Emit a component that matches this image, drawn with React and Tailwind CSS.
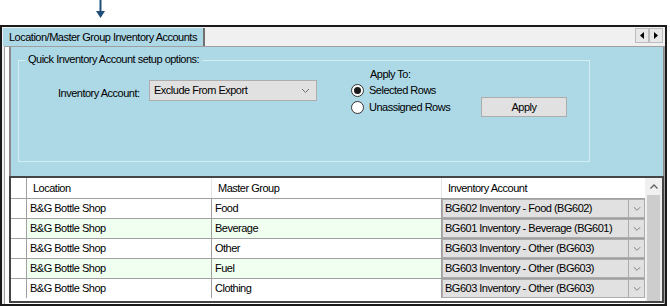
import React from "react";

const rows = [
  { loc: "B&G Bottle Shop", group: "Food", acct: "BG602 Inventory - Food (BG602)" },
  { loc: "B&G Bottle Shop", group: "Beverage", acct: "BG601 Inventory - Beverage (BG601)" },
  { loc: "B&G Bottle Shop", group: "Other", acct: "BG603 Inventory - Other (BG603)" },
  { loc: "B&G Bottle Shop", group: "Fuel", acct: "BG603 Inventory - Other (BG603)" },
  { loc: "B&G Bottle Shop", group: "Clothing", acct: "BG603 Inventory - Other (BG603)" },
];

function Chevron({ w = 9 }) {
  return (
    <svg width={w} height="6" viewBox="0 0 9 6">
      <path d="M1 1 L4.5 4.5 L8 1" fill="none" stroke="#707070" strokeWidth="1" />
    </svg>
  );
}

export default function App() {
  return (
    <div className="w-[670px] h-[306px] bg-white text-[11px] tracking-[-0.5px] text-black overflow-hidden whitespace-nowrap" style={{ fontFamily: '"Liberation Sans", Arial, sans-serif' }}>
      {/* pointer arrow */}
      <div className="h-[25px] pl-[96px]">
        <svg width="9" height="19" viewBox="0 0 9 19">
          <rect x="3.5" y="0" width="2" height="13" fill="#1f4e79" />
          <path d="M0 11 L9 11 L4.5 18 Z" fill="#1f4e79" />
        </svg>
      </div>

      {/* window frame */}
      <div className="w-[667px] h-[281px] border-2 border-[#1a1a1a] bg-[#f0f0f0] flex flex-col">
        {/* tab strip */}
        <div className="h-[19px] flex items-end justify-between pl-[1px] pr-[2px]">
          <div className="h-[18px] pl-[6px] pr-[6px] bg-[#add8e6] border-r-2 border-[#707070] flex items-center">
            Location/Master Group Inventory Accounts
          </div>
          <div className="flex self-start mt-[1px]">
            <div className="w-[14px] h-[15px] border border-[#bcbcbc] bg-[#e8e8e8] flex items-center justify-center">
              <svg width="4" height="7" viewBox="0 0 4 7"><path d="M4 0 L0 3.5 L4 7 Z" fill="#000" /></svg>
            </div>
            <div className="w-[14px] h-[15px] border border-[#bcbcbc] bg-[#e8e8e8] flex items-center justify-center">
              <svg width="4" height="7" viewBox="0 0 4 7"><path d="M0 0 L4 3.5 L0 7 Z" fill="#000" /></svg>
            </div>
          </div>
        </div>

        {/* tab page */}
        <div className="flex-1 border border-[#a0a0a0] border-b-0 ml-[2px] pl-[4px] bg-white flex flex-col">
          <div className="h-[129px] bg-[#add8e6] border-l-2 border-r border-[#8a8a8a] px-[7px] pt-[13px]">
            {/* group box */}
            <div className="relative w-[572px] h-[102px] border border-[#d5eef4]">
              <div className="absolute -top-[10px] left-[6px] px-[3px] bg-[#add8e6] leading-[16px]">
                Quick Inventory Account setup options:
              </div>
              <div className="flex">
                <div className="w-[130px] pt-[24px] pl-[39px]">Inventory Account:</div>
                <div className="mt-[19px] w-[168px] h-[21px] bg-[#e1e1e1] border border-[#adadad] flex items-center justify-between pl-[4px] pr-[6px]">
                  <span>Exclude From Export</span>
                  <Chevron />
                </div>
                <div className="ml-[34px] w-[130px] pt-[5px] flex flex-col">
                  <div className="pl-[19px] h-[16px] leading-[16px]">Apply To:</div>
                  <div className="flex items-center h-[17px]">
                    <div className="w-[13px] h-[13px] rounded-full border border-[#333] bg-white flex items-center justify-center mr-[5px]">
                      <div className="w-[7px] h-[7px] rounded-full bg-[#1a1a1a]" />
                    </div>
                    <span>Selected Rows</span>
                  </div>
                  <div className="flex items-center h-[17px]">
                    <div className="w-[13px] h-[13px] rounded-full border border-[#333] bg-white mr-[5px]" />
                    <span>Unassigned Rows</span>
                  </div>
                </div>
                <div className="mt-[36px] w-[86px] h-[20px] bg-[#e1e1e1] border border-[#adadad] flex items-center justify-center">
                  Apply
                </div>
              </div>
            </div>
          </div>

          {/* grid */}
          <div className="h-[127px] border-2 border-[#454545] flex bg-white">
            <div className="flex-1 flex flex-col">
              <div className="h-[20px] flex">
                <div className="w-[16px] border-r border-[#a0a0a0]" />
                <div className="w-[185px] pl-[6px] flex items-center border-r border-[#e5e5e5]">Location</div>
                <div className="w-[230px] pl-[6px] flex items-center border-r border-[#e5e5e5]">Master Group</div>
                <div className="flex-1 pl-[6px] flex items-center">Inventory Account</div>
              </div>
              {rows.map((r, i) => (
                <div key={i} className={`h-[20px] flex border-t border-[#a0a0a0] ${i % 2 === 1 ? "bg-[#f0fff0]" : "bg-white"}`}>
                  <div className="w-[16px] bg-white border-r border-[#a0a0a0]" />
                  <div className="w-[185px] pl-[3px] flex items-center border-r border-[#a0a0a0]">{r.loc}</div>
                  <div className="w-[230px] pl-[3px] flex items-center border-r border-[#a0a0a0]">{r.group}</div>
                  <div className="flex-1 flex bg-[#e1e1e1] border border-[#adadad]">
                    <div className="flex-1 pl-[2px] flex items-center border-r border-[#adadad]">{r.acct}</div>
                    <div className="w-[15px] flex items-center justify-center">
                      <Chevron w={8} />
                    </div>
                  </div>
                </div>
              ))}
            </div>
            {/* vertical scrollbar */}
            <div className="w-[17px] bg-[#f0f0f0] flex flex-col">
              <div className="h-[17px] flex items-center justify-center">
                <svg width="8" height="5" viewBox="0 0 8 5"><path d="M0.5 4.5 L4 1 L7.5 4.5" fill="none" stroke="#606060" strokeWidth="1.3" /></svg>
              </div>
              <div className="flex-1 mx-[2px] bg-[#cdcdcd]" />
            </div>
          </div>
        </div>
      </div>
    </div>
  );
}
